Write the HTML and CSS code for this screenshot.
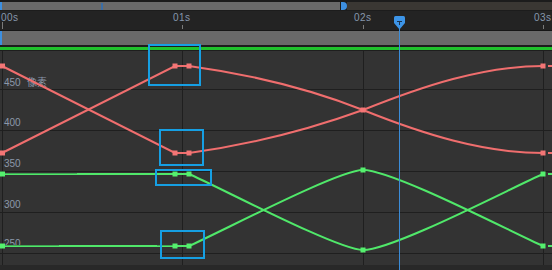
FILE: index.html
```html
<!DOCTYPE html>
<html>
<head>
<meta charset="utf-8">
<link rel="stylesheet" href="styles.css">
</head>
<body>
<div class="editor">
  <div class="scroll">
    <div class="track">
      <div class="track-start"></div>
      <div class="track-fill"><span class="track-mark"></span></div>
      <div class="thumb"></div>
      <div class="track-rest"></div>
    </div>
  </div>
  <div class="ruler">
    <span class="ruler-label l0">00s</span>
    <span class="ruler-label l1">01s</span>
    <span class="ruler-label l2">02s</span>
    <span class="ruler-label l3">03s</span>
    <span class="tick tick-first"></span>
    <span class="tick k1"></span>
    <span class="tick k2"></span>
    <span class="tick k3"></span>
  </div>
  <div class="band"><div class="band-start"></div></div>
  <div class="sep"></div>
  <div class="green"></div>
  <div class="graph">
    <svg class="graph-svg" width="552" height="214" viewBox="0 51 552 214">
      <g class="grid">
        <line x1="0" y1="89.5" x2="552" y2="89.5"/>
        <line x1="0" y1="130.5" x2="552" y2="130.5"/>
        <line x1="0" y1="171.5" x2="552" y2="171.5"/>
        <line x1="0" y1="212.5" x2="552" y2="212.5"/>
        <line x1="0" y1="253.5" x2="552" y2="253.5"/>
        <line x1="2.5" y1="51" x2="2.5" y2="265"/>
        <line x1="182.5" y1="51" x2="182.5" y2="265"/>
        <line x1="363.5" y1="51" x2="363.5" y2="265"/>
        <line x1="543.5" y1="51" x2="543.5" y2="265"/>
      </g>
      <g class="vlabels">
        <text x="4" y="86">450</text>
        <text x="27" y="86" class="unit">像素</text>
        <text x="4" y="126">400</text>
        <text x="4" y="167">350</text>
        <text x="4" y="208">300</text>
        <text x="4" y="247">250</text>
      </g>
      <g class="curve red">
        <path d="M2,66 L175,153 L189,153 C247,145 305,131 363,110 C423,86 483,66 543,66"/>
        <path d="M2,153 L175,66 L189,66 C247,74 305,87 363,110 C423,134 483,153 543,153"/>
        <path d="M548,66 H552 M548,153 H552"/>
      </g>
      <g class="curve green-c">
        <path d="M2,174 L189,174 C219,187 338,250 363,250 C393,250 513,187 543,174"/>
        <path d="M2,246 L189,246 C219,233 338,170 363,170 C393,170 513,233 543,246"/>
        <path d="M548,174 H552 M548,246 H552"/>
      </g>
      <g class="shade">
        <line x1="2" y1="173.5" x2="77" y2="173.5"/>
        <line x1="2" y1="245.5" x2="59" y2="245.5"/>
        <line x1="157" y1="245.5" x2="173" y2="245.5"/>
      </g>
      <g class="keys red-k">
        <rect x="0" y="63.5" width="5" height="5"/>
        <rect x="172.5" y="63.5" width="5" height="5"/>
        <rect x="186.5" y="63.5" width="5" height="5"/>
        <rect x="0" y="150.5" width="5" height="5"/>
        <rect x="172.5" y="150.5" width="5" height="5"/>
        <rect x="186.5" y="150.5" width="5" height="5"/>
        <rect x="360.5" y="107.5" width="5" height="5"/>
        <rect x="540.5" y="63.5" width="5" height="5"/>
        <rect x="540.5" y="150.5" width="5" height="5"/>
      </g>
      <g class="keys green-k">
        <rect x="0" y="171.5" width="5" height="5"/>
        <rect x="172.5" y="171.5" width="5" height="5"/>
        <rect x="186.5" y="171.5" width="5" height="5"/>
        <rect x="0" y="243.5" width="5" height="5"/>
        <rect x="172.5" y="243.5" width="5" height="5"/>
        <rect x="186.5" y="243.5" width="5" height="5"/>
        <rect x="360.5" y="167.5" width="5" height="5"/>
        <rect x="360.5" y="247.5" width="5" height="5"/>
        <rect x="540.5" y="171.5" width="5" height="5"/>
        <rect x="540.5" y="243.5" width="5" height="5"/>
      </g>
    </svg>
  </div>
  <div class="foot"></div>

  <svg class="overlay" width="552" height="270" viewBox="0 0 552 270">
    <g class="sel">
      <rect x="149" y="45" width="51" height="40"/>
      <rect x="160" y="130" width="43" height="35"/>
      <rect x="156" y="170" width="55" height="15"/>
      <rect x="161" y="231" width="43" height="27"/>
    </g>
    <line class="playline" x1="399.5" y1="28" x2="399.5" y2="270"/>
    <path class="playhead" d="M394,17.5 Q394,16 395.5,16 H403.5 Q405,16 405,17.5 V23 L399.5,29.5 L394,23 Z"/>
    <rect class="playmark" x="397" y="21" width="5" height="1"/>
    <rect class="playmark" x="399" y="21" width="1" height="4"/>
  </svg>
</div>
</body>
</html>
```

FILE: styles.css
```css
* {
  box-sizing: border-box;
  margin: 0;
  padding: 0;
}

html,
body {
  width: 552px;
  height: 270px;
  overflow: hidden;
  background: #222222;
}

.editor {
  position: relative;
  width: 552px;
  height: 270px;
  display: flex;
  flex-direction: column;
  font-family: "Liberation Sans", "Noto Sans CJK SC", sans-serif;
}

.scroll {
  height: 11px;
  background: #1c1c1c;
  padding: 2px 0 1px;
}

.track {
  display: flex;
  height: 8px;
}

.track-start {
  width: 2px;
  background: #3d8fe0;
}

.track-fill {
  position: relative;
  width: 339px;
  background: #6a6a6a;
  border-right: 1px solid #1a1a1a;
}

.track-mark {
  position: absolute;
  left: 99px;
  top: 1px;
  width: 2px;
  height: 7px;
  background: #3b6ea6;
}

.thumb {
  width: 6px;
  background: #3d8fe0;
  border-radius: 0 4px 4px 0;
}

.track-rest {
  flex: 1;
  background: #3a3733;
}

.ruler {
  position: relative;
  height: 19px;
  background: #232323;
}

.ruler-label {
  position: absolute;
  top: 1px;
  font-size: 10px;
  line-height: 12px;
  letter-spacing: 0.5px;
  color: #8797ad;
}

.l0 { left: 1px; }
.l1 { left: 173px; }
.l2 { left: 354px; }
.l3 { left: 534px; }

.tick {
  position: absolute;
  bottom: 1px;
  width: 1px;
  height: 4px;
  background: #7a7a7a;
}

.tick-first { left: 2px; height: 7px; }
.k1 { left: 182px; }
.k2 { left: 363px; }
.k3 { left: 543px; }

.band {
  height: 15px;
  border-top: 1px solid #151515;
  background: #696969;
  display: flex;
}

.band-start {
  width: 2px;
  background: #3d8fe0;
}

.sep {
  height: 2px;
  background: #1c1c1c;
}

.green {
  height: 3px;
  background: #1fc22c;
}

.graph {
  height: 215px;
  border-top: 1px solid #1e1e1e;
  background: #333333;
}

.graph-svg {
  display: block;
}

.grid line {
  stroke: #1f1f1f;
  stroke-width: 1;
}

.vlabels text {
  font-family: "Liberation Sans", "Noto Sans CJK SC", sans-serif;
  font-size: 10px;
  fill: #8c98aa;
}

.vlabels .unit {
  font-size: 10px;
}

.curve path {
  fill: none;
  stroke-width: 2;
}

.red path {
  stroke: #f06e6e;
}

.green-c path {
  stroke: #50e86a;
}

.shade line {
  stroke: #3fa853;
  stroke-width: 1;
}

.red-k rect {
  fill: #f47676;
}

.green-k rect {
  fill: #55f06e;
}

.foot {
  height: 5px;
  background: #282828;
}

.overlay {
  position: absolute;
  left: 0;
  top: 0;
  pointer-events: none;
}

.sel rect {
  fill: none;
  stroke: #169fe3;
  stroke-width: 2;
}

.playline {
  stroke: #3b8cd8;
  stroke-width: 1;
}

.playhead {
  fill: #3d95e8;
}

.playmark {
  fill: #1a3350;
}
```
